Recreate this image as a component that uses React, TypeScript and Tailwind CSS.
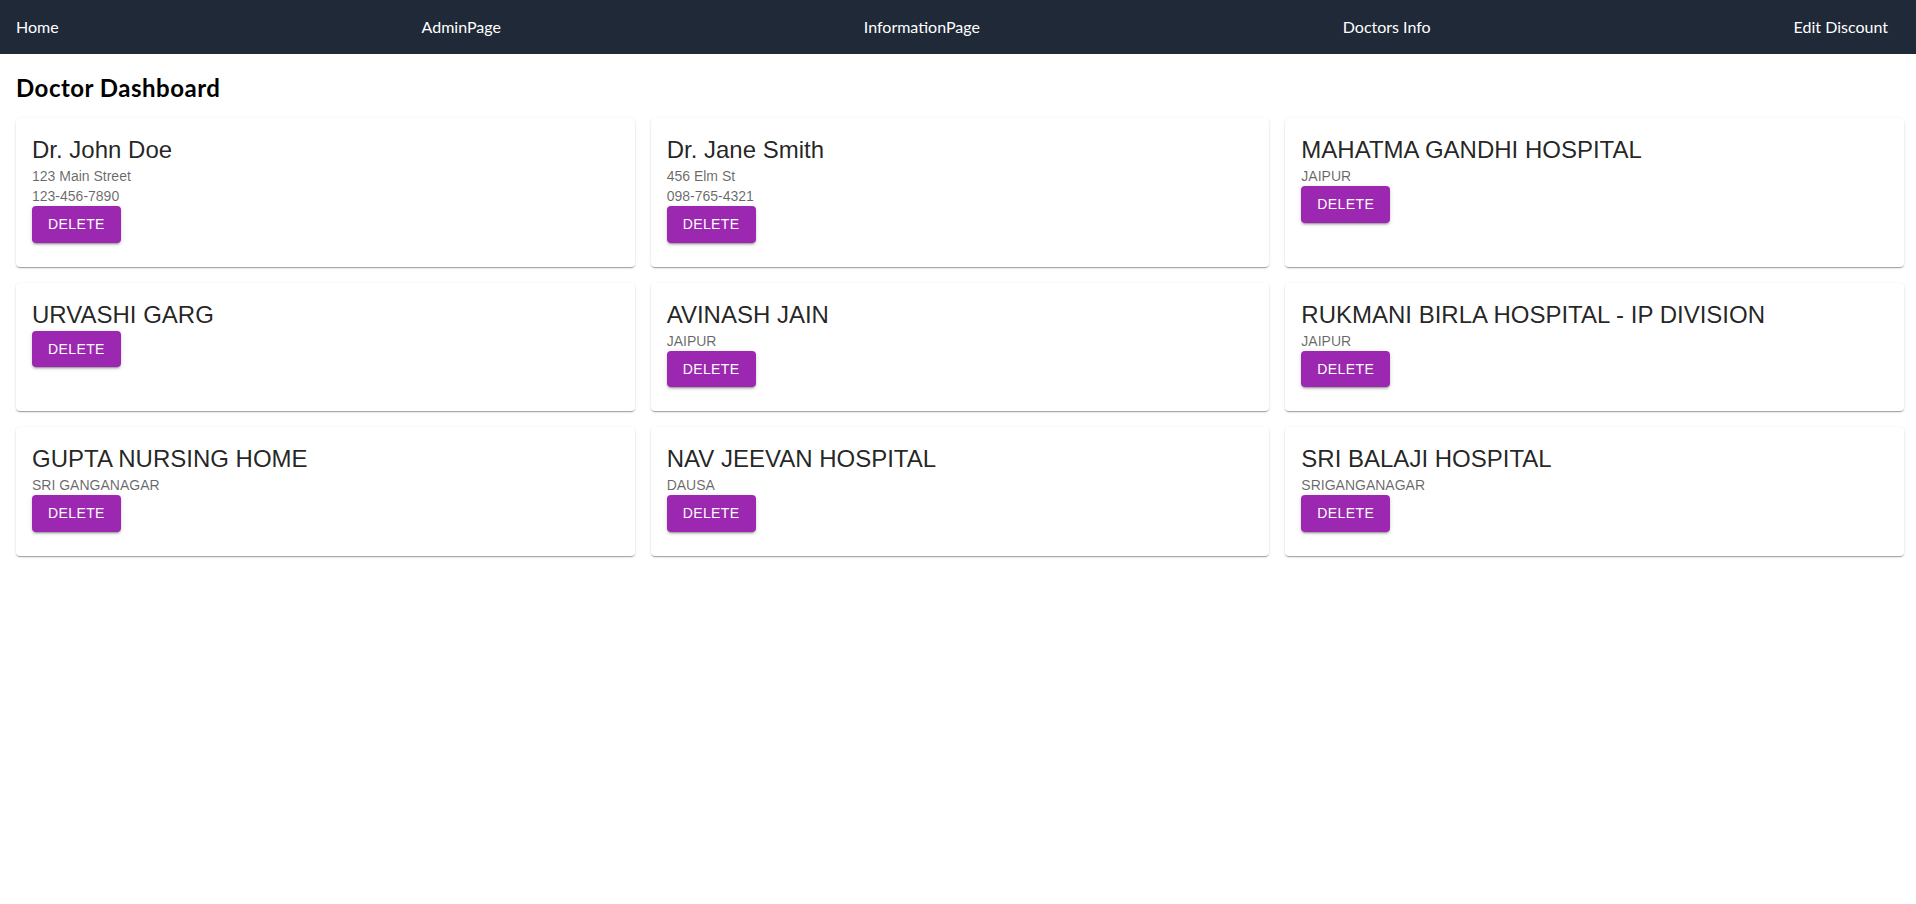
const links = ["Home", "AdminPage", "InformationPage", "Doctors Info", "Edit Discount"]

type Doctor = { name: string; lines: string[] }

const doctors: Doctor[] = [
  { name: "Dr. John Doe", lines: ["123 Main Street", "123-456-7890"] },
  { name: "Dr. Jane Smith", lines: ["456 Elm St", "098-765-4321"] },
  { name: "MAHATMA GANDHI HOSPITAL", lines: ["JAIPUR"] },
  { name: "URVASHI GARG", lines: [] },
  { name: "AVINASH JAIN", lines: ["JAIPUR"] },
  { name: "RUKMANI BIRLA HOSPITAL - IP DIVISION", lines: ["JAIPUR"] },
  { name: "GUPTA NURSING HOME", lines: ["SRI GANGANAGAR"] },
  { name: "NAV JEEVAN HOSPITAL", lines: ["DAUSA"] },
  { name: "SRI BALAJI HOSPITAL", lines: ["SRIGANGANAGAR"] },
]

const DoctorCard = ({ doctor }: { doctor: Doctor }) => (
  <div className="rounded bg-white px-4 pt-4 pb-6 shadow-[0px_2px_1px_-1px_rgba(0,0,0,0.2),0px_1px_1px_0px_rgba(0,0,0,0.14),0px_1px_3px_0px_rgba(0,0,0,0.12)] font-['Liberation_Sans',Arial,sans-serif]">
    <h5 className="text-2xl leading-8 text-black/87">{doctor.name}</h5>
    {doctor.lines.map((line) => (
      <p key={line} className="text-sm leading-5 text-black/60">
        {line}
      </p>
    ))}
    <button className="h-[36.5px] rounded bg-[#9c27b0] px-4 text-sm uppercase tracking-[0.4px] text-white shadow-[0px_3px_1px_-2px_rgba(0,0,0,0.2),0px_2px_2px_0px_rgba(0,0,0,0.14),0px_1px_5px_0px_rgba(0,0,0,0.12)]">
      Delete
    </button>
  </div>
)

const App = () => {
  return (
    <div className="min-h-screen bg-white font-['Lato','Noto_Sans',sans-serif]">
      <nav className="flex h-[54px] items-center justify-between bg-[#1f2937] pl-4 pr-7 text-white">
        {links.map((link) => (
          <a key={link} href="#" className="text-base">
            {link}
          </a>
        ))}
      </nav>
      <div className="pt-[18px] pl-4 pr-3">
        <h2 className="mb-[14px] text-2xl leading-8 font-bold tracking-[0.5px]">Doctor Dashboard</h2>
        <div className="grid grid-cols-3 gap-4">
          {doctors.map((doctor) => (
            <DoctorCard key={doctor.name} doctor={doctor} />
          ))}
        </div>
      </div>
    </div>
  )
}

export default App
